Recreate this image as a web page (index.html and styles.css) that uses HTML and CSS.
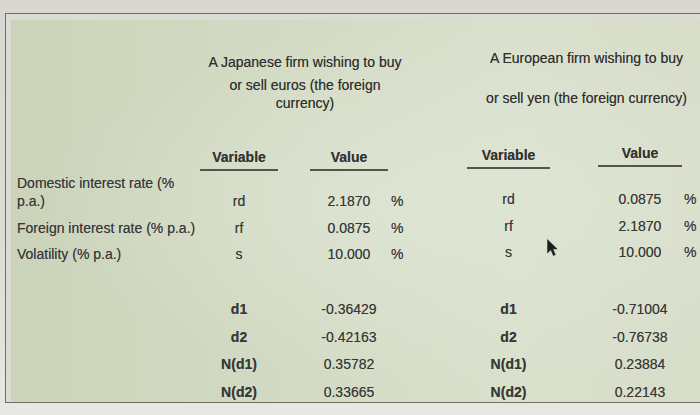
FILE: index.html
```html
<!DOCTYPE html>
<html>
<head>
<meta charset="utf-8">
<link rel="stylesheet" href="styles.css">
</head>
<body>
<div class="screen">
  <div class="panel">
    <div class="sheet">
      <div class="grid">
        <div></div>
        <div class="head head-jp">
          <div>A Japanese firm wishing to buy</div>
          <div class="jp2">or sell euros (the foreign</div>
          <div>currency)</div>
        </div>
        <div></div>
        <div class="head head-eu">
          <div>A European firm wishing to buy</div>
          <div class="eu2">or sell yen (the foreign currency)</div>
        </div>

        <div></div>
        <div class="th">Variable</div>
        <div></div>
        <div class="th">Value</div>
        <div></div>
        <div></div>
        <div class="th up2">Variable</div>
        <div></div>
        <div class="th up4">Value</div>
        <div></div>

        <div class="lbl">Domestic interest rate (%<br>p.a.)</div>
        <div class="c">rd</div>
        <div></div>
        <div class="c">2.1870</div>
        <div class="pct">%</div>
        <div></div>
        <div class="c up2">rd</div>
        <div></div>
        <div class="c up2">0.0875</div>
        <div class="pct pct2 up2">%</div>

        <div class="lbl">Foreign interest rate (% p.a.)</div>
        <div class="c">rf</div>
        <div></div>
        <div class="c">0.0875</div>
        <div class="pct">%</div>
        <div></div>
        <div class="c up2">rf</div>
        <div></div>
        <div class="c up2">2.1870</div>
        <div class="pct pct2 up2">%</div>

        <div class="lbl">Volatility (% p.a.)</div>
        <div class="c">s</div>
        <div></div>
        <div class="c">10.000</div>
        <div class="pct">%</div>
        <div></div>
        <div class="c up2">s</div>
        <div></div>
        <div class="c up2">10.000</div>
        <div class="pct pct2 up2">%</div>

        <div></div>
        <div class="c b">d1</div>
        <div></div>
        <div class="c">-0.36429</div>
        <div></div>
        <div></div>
        <div class="c b">d1</div>
        <div></div>
        <div class="c">-0.71004</div>
        <div></div>

        <div></div>
        <div class="c b">d2</div>
        <div></div>
        <div class="c">-0.42163</div>
        <div></div>
        <div></div>
        <div class="c b">d2</div>
        <div></div>
        <div class="c">-0.76738</div>
        <div></div>

        <div></div>
        <div class="c b">N(d1)</div>
        <div></div>
        <div class="c">0.35782</div>
        <div></div>
        <div></div>
        <div class="c b">N(d1)</div>
        <div></div>
        <div class="c">0.23884</div>
        <div></div>

        <div></div>
        <div class="c b">N(d2)</div>
        <div></div>
        <div class="c">0.33665</div>
        <div></div>
        <div></div>
        <div class="c b">N(d2)</div>
        <div></div>
        <div class="c">0.22143</div>
        <div></div>
      </div>
    </div>
  </div>
  <svg class="cursor" width="12" height="18" viewBox="0 0 12 18">
    <path d="M0.5 0.5 L0.5 14 L3.8 10.8 L6.4 16.6 L8.4 15.7 L5.9 10 L10.2 10 Z" fill="#1c1c1c" stroke="#3a3a3a" stroke-width="0.6"/>
  </svg>
</div>
</body>
</html>
```

FILE: styles.css
```css
html, body {
  margin: 0;
  padding: 0;
}

body {
  width: 700px;
  height: 415px;
  overflow: hidden;
  background: linear-gradient(180deg, #d8d7d1 0%, #dddcd6 60%, #e8e8e4 100%);
  font-family: "Liberation Sans", Arial, sans-serif;
  font-size: 14px;
  line-height: 18px;
  color: #383838;
  text-shadow: 0 0 0.6px rgba(40, 40, 40, 0.55);
}

.screen {
  position: relative;
  width: 700px;
  height: 415px;
  overflow: hidden;
}

.panel {
  margin: 13px 0 0 5px;
  border: 1px solid #6e6e66;
  border-right: none;
  padding: 6px 0 0 5px;
  background: #dddcd4;
  width: 720px;
}

.sheet {
  padding: 27px 0 1px 6px;
  background:
    radial-gradient(ellipse at 62% 48%, rgba(224, 230, 214, 0.8) 0%, rgba(224, 230, 214, 0) 65%),
    linear-gradient(90deg, #cbd3ba 0%, #d2dac3 35%, #d9e0cc 70%, #d7ddc9 100%);
}

.grid {
  display: grid;
  grid-template-columns: 183px 78px 32px 78px 22px 57px 83px 48px 84px 24px;
  grid-template-rows: 65px 59px 39px 27px 26px 55px 28px 27px 28px;
  align-items: end;
}

.head {
  align-self: start;
  text-align: center;
  color: #2e2e2e;
  white-space: nowrap;
}

.head-jp {
  grid-column: span 4;
  margin-top: 6px;
}

.jp2 {
  margin-top: 5px;
}

.head-eu {
  grid-column: span 4;
  margin-top: 2px;
}

.eu2 {
  margin-top: 22px;
}

.th {
  font-weight: bold;
  text-align: center;
  color: #333;
  padding-bottom: 3px;
  border-bottom: 2px solid #55554d;
}

.up2 {
  margin-bottom: 2px;
}

.up4 {
  margin-bottom: 4px;
}

.lbl {
  white-space: nowrap;
}

.c {
  text-align: center;
  white-space: nowrap;
}

.b {
  font-weight: bold;
}

.pct {
  padding-left: 3px;
}

.pct2 {
  padding-left: 2px;
}

.cursor {
  position: absolute;
  left: 547px;
  top: 239px;
}
```
